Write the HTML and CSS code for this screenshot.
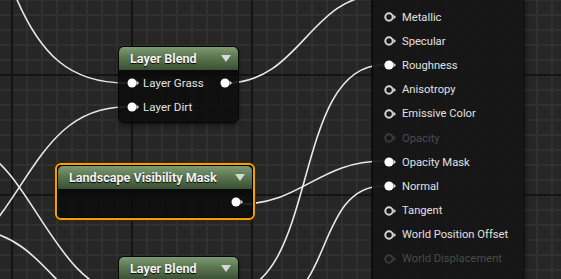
FILE: index.html
```html
<!DOCTYPE html>
<html lang="en">
<head>
  <meta charset="UTF-8">
  <title>Material Graph</title>
  <link rel="stylesheet" href="styles.css">
</head>
<body>
  <div class="graph">
    <svg class="wires" width="561" height="279" viewBox="0 0 561 279">
      <path d="M15,-5 C40,55 70,83 126,83" />
      <path d="M126,107 C40,107 30,200 -40,260" />
      <path d="M-20,150 C30,170 60,293 126,293" />
      <path d="M-20,230 C50,240 60,317 126,317" />
      <path d="M226,83 C300,83 310,-5 380,-5" />
      <path d="M383,65 C290,65 320,293 226,293" />
      <path d="M242,204 C300,204 320,161 383,161" />
      <path d="M383,186 C320,186 330,290 280,300" />
    </svg>

    <!-- layer blend (top) -->
    <div class="node" style="left:118px; top:46px; width:119px;">
      <div class="node-head">
        <span class="node-title">Layer Blend</span>
        <span class="caret"></span>
      </div>
      <div class="node-body">
        <div class="pin-row">
          <span class="pin-in"><svg width="12" height="10"><circle cx="5" cy="5" r="4.5" class="full"/><path d="M9.5,2.5 L12,5 L9.5,7.5Z" class="tip"/></svg>Layer Grass</span>
          <span class="pin-out"><svg width="12" height="10"><circle cx="5" cy="5" r="4.5" class="full"/><path d="M9.5,2.5 L12,5 L9.5,7.5Z" class="tip"/></svg></span>
        </div>
        <div class="pin-row">
          <span class="pin-in"><svg width="12" height="10"><circle cx="5" cy="5" r="4.5" class="full"/><path d="M9.5,2.5 L12,5 L9.5,7.5Z" class="tip"/></svg>Layer Dirt</span>
        </div>
      </div>
    </div>

    <!-- landscape visibility mask (selected) -->
    <div class="node selected" style="left:55px; top:163px; width:194px;">
      <div class="node-head">
        <span class="node-title">Landscape Visibility Mask</span>
        <span class="caret"></span>
      </div>
      <div class="node-body">
        <div class="pin-row end">
          <span class="pin-out"><svg width="12" height="10"><circle cx="5" cy="5" r="4.5" class="full"/><path d="M9.5,2.5 L12,5 L9.5,7.5Z" class="tip"/></svg></span>
        </div>
      </div>
    </div>

    <!-- layer blend (bottom, runs off the view) -->
    <div class="node" style="left:118px; top:256px; width:119px;">
      <div class="node-head">
        <span class="node-title">Layer Blend</span>
        <span class="caret"></span>
      </div>
      <div class="node-body tall"></div>
    </div>

    <!-- material result inputs -->
    <div class="result">
      <div class="res-row"><svg width="12" height="10"><circle cx="5" cy="5" r="3.7" class="ring"/><path d="M9.5,2.5 L12,5 L9.5,7.5Z" class="tip"/></svg>Metallic</div>
      <div class="res-row"><svg width="12" height="10"><circle cx="5" cy="5" r="3.7" class="ring"/><path d="M9.5,2.5 L12,5 L9.5,7.5Z" class="tip"/></svg>Specular</div>
      <div class="res-row"><svg width="12" height="10"><circle cx="5" cy="5" r="4.6" class="full"/><path d="M9.5,2.5 L12,5 L9.5,7.5Z" class="tip"/></svg>Roughness</div>
      <div class="res-row"><svg width="12" height="10"><circle cx="5" cy="5" r="3.7" class="ring"/><path d="M9.5,2.5 L12,5 L9.5,7.5Z" class="tip"/></svg>Anisotropy</div>
      <div class="res-row"><svg width="12" height="10"><circle cx="5" cy="5" r="3.7" class="ring"/><path d="M9.5,2.5 L12,5 L9.5,7.5Z" class="tip"/></svg>Emissive Color</div>
      <div class="res-row off"><svg width="12" height="10"><circle cx="5" cy="5" r="3.7" class="ring"/><path d="M9.5,2.5 L12,5 L9.5,7.5Z" class="tip"/></svg>Opacity</div>
      <div class="res-row"><svg width="12" height="10"><circle cx="5" cy="5" r="4.6" class="full"/><path d="M9.5,2.5 L12,5 L9.5,7.5Z" class="tip"/></svg>Opacity Mask</div>
      <div class="res-row"><svg width="12" height="10"><circle cx="5" cy="5" r="4.6" class="full"/><path d="M9.5,2.5 L12,5 L9.5,7.5Z" class="tip"/></svg>Normal</div>
      <div class="res-row"><svg width="12" height="10"><circle cx="5" cy="5" r="3.7" class="ring"/><path d="M9.5,2.5 L12,5 L9.5,7.5Z" class="tip"/></svg>Tangent</div>
      <div class="res-row"><svg width="12" height="10"><circle cx="5" cy="5" r="3.7" class="ring"/><path d="M9.5,2.5 L12,5 L9.5,7.5Z" class="tip"/></svg>World Position Offset</div>
      <div class="res-row off"><svg width="12" height="10"><circle cx="5" cy="5" r="3.7" class="ring"/><path d="M9.5,2.5 L12,5 L9.5,7.5Z" class="tip"/></svg>World Displacement</div>
    </div>
  </div>
</body>
</html>
```

FILE: styles.css
```css
body {
  margin: 0;
  overflow: hidden;
  font-family: Roboto, "Liberation Sans", sans-serif;
  background: #262626;
}
.graph {
  position: relative;
  width: 561px;
  height: 279px;
  overflow: hidden;
  background-color: #262626;
  background-image:
    linear-gradient(to right, #141414 2px, transparent 2px),
    linear-gradient(to bottom, #141414 2px, transparent 2px),
    linear-gradient(to right, #303030 2px, transparent 2px),
    linear-gradient(to bottom, #303030 2px, transparent 2px);
  background-size: 120px 120px, 120px 120px, 15px 15px, 15px 15px;
  background-position: 11px 0, 0 74px, 11px 0, 0 -1px;
}
.wires {
  position: absolute;
  left: 0;
  top: 0;
}
.wires path {
  fill: none;
  stroke: #e8e8e8;
  stroke-width: 1.6;
}

.node {
  position: absolute;
  border-radius: 6px;
  background: rgba(12, 12, 12, 0.88);
  border: 1px solid #050505;
  box-shadow: 0 2px 4px rgba(0, 0, 0, 0.5);
}
.node.selected {
  border: 2px solid #f2a100;
  box-shadow: 0 0 0 1px #3a2500, inset 0 0 0 1px #000;
  padding: 1px;
}
.node-head {
  height: 23px;
  display: flex;
  align-items: center;
  justify-content: space-between;
  padding: 0 7px 0 11px;
  border-radius: 5px 5px 0 0;
  background: linear-gradient(to bottom, #7d9a72 0%, #5b7750 45%, #3a4f33 100%);
}
.node-title {
  color: #f4f4f4;
  font-size: 12.6px;
  font-weight: bold;
  text-shadow: 0 1px 1px #000;
}
.caret {
  width: 0;
  height: 0;
  border-left: 5px solid transparent;
  border-right: 5px solid transparent;
  border-top: 7px solid #d8d8d8;
}
.node-body {
  padding: 1px 0 3px;
  background: linear-gradient(to bottom, rgba(0, 0, 0, 0.4), transparent 8px);
}
.node-body.tall {
  height: 48px;
}
.pin-row {
  height: 24px;
  display: flex;
  align-items: center;
  justify-content: space-between;
  padding: 0 6px 0 8px;
  color: #e2e2e2;
  font-size: 11.6px;
}
.pin-row.end {
  justify-content: flex-end;
}
.pin-in, .pin-out {
  display: flex;
  align-items: center;
  gap: 4px;
}
.node.selected .pin-row {
  padding-right: 9px;
}

.full {
  fill: #ffffff;
}
.ring {
  fill: none;
  stroke: #d4d4d4;
  stroke-width: 2;
}
.tip {
  fill: #d4d4d4;
}

.result {
  position: absolute;
  left: 372px;
  top: 0;
  width: 152px;
  height: 279px;
  padding-top: 5px;
  box-sizing: border-box;
  background: rgba(22, 22, 22, 0.93);
  border-left: 1px solid #080808;
  border-right: 1px solid #0c0c0c;
  box-shadow: 2px 0 4px rgba(0, 0, 0, 0.45);
}
.res-row {
  height: 24.2px;
  display: flex;
  align-items: center;
  gap: 6px;
  padding-left: 11px;
  color: #e0e0e0;
  font-size: 11.2px;
}
.res-row.off {
  color: #4a4a4a;
}
.res-row.off .ring {
  stroke: #3a3a3a;
}
.res-row.off .tip {
  fill: #3a3a3a;
}
```
